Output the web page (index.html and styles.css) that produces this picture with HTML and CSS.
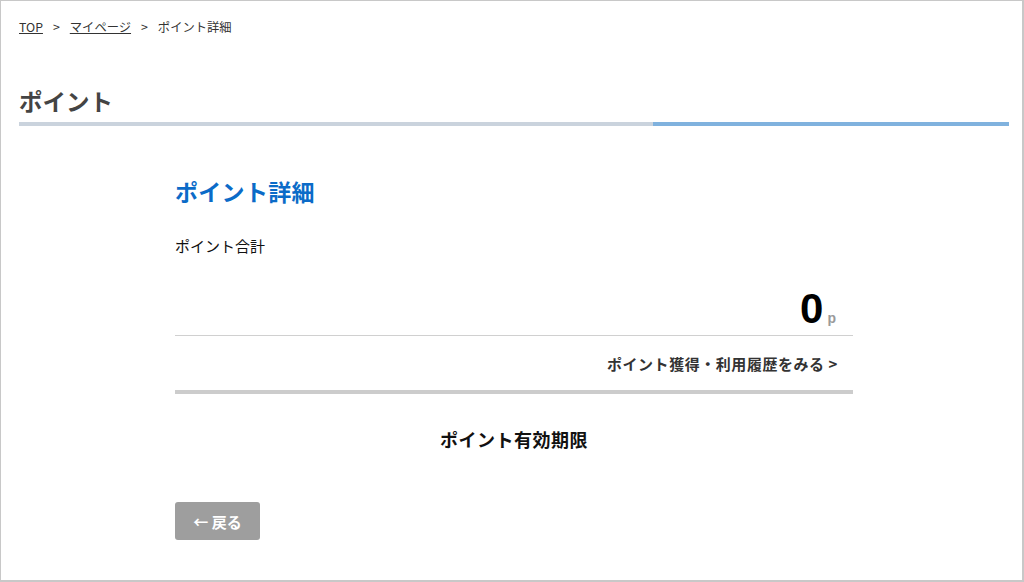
FILE: index.html
```html
<!DOCTYPE html>
<html lang="ja">
<head>
<meta charset="utf-8">
<title>ポイント詳細</title>
<link rel="stylesheet" href="styles.css">
</head>
<body>
<div class="frame">
  <nav class="breadcrumb">
    <a href="#" class="crumb-link">TOP</a>
    <span class="sep">&gt;</span>
    <a href="#" class="crumb-link">マイページ</a>
    <span class="sep">&gt;</span>
    <span class="crumb-current">ポイント詳細</span>
  </nav>
  <h1 class="page-title">ポイント</h1>
  <div class="title-bar"><span class="bar-gray"></span><span class="bar-blue"></span></div>

  <main class="content">
    <h2 class="section-title">ポイント詳細</h2>
    <p class="total-label">ポイント合計</p>
    <div class="amount-row">
      <span class="amount">0</span><span class="unit">p</span>
    </div>
    <div class="history-row">
      <a href="#" class="history-link">ポイント獲得・利用履歴をみる &gt;</a>
    </div>
    <div class="thick-line"></div>
    <h3 class="expire-title">ポイント有効期限</h3>
    <a href="#" class="back-btn">← 戻る</a>
  </main>
</div>
</body>
</html>
```

FILE: styles.css
```css
html, body {
  margin: 0;
  padding: 0;
  background: #fff;
}
body {
  font-family: "Noto Sans CJK JP", "Noto Sans", sans-serif;
  color: #333;
}
.frame {
  box-sizing: border-box;
  width: 1024px;
  height: 582px;
  border-top: 1px solid #c8c8c8;
  border-left: 1px solid #c8c8c8;
  border-right: 2px solid #c8c8c8;
  border-bottom: 2px solid #c8c8c8;
  overflow: hidden;
}
.breadcrumb {
  display: flex;
  align-items: center;
  padding: 17px 0 0 18px;
  font-size: 12.3px;
  line-height: 18px;
  color: #333;
}
.crumb-link {
  color: #333;
  text-decoration: underline;
}
.sep {
  margin: 0 10px;
}
.page-title {
  margin: 49px 0 0 18px;
  font-size: 23.5px;
  line-height: 32px;
  font-weight: 700;
  color: #444;
}
.title-bar {
  display: flex;
  margin: 5px 13px 0 18px;
  height: 4px;
}
.bar-gray {
  flex: 1;
  background: #cad3dd;
}
.bar-blue {
  width: 356px;
  background: #80b2de;
}
.content {
  width: 678px;
  margin: 49px 0 0 174px;
}
.section-title {
  margin: 0;
  font-size: 23px;
  line-height: 32px;
  font-weight: 700;
  letter-spacing: 0.3px;
  color: #0b6bc8;
}
.total-label {
  margin: 28px 0 0;
  font-size: 15px;
  line-height: 22px;
  color: #111;
}
.amount-row {
  display: flex;
  justify-content: flex-end;
  align-items: baseline;
  margin-top: 28px;
  padding-right: 17px;
  height: 50px;
  border-bottom: 1px solid #d0d0d0;
}
.amount {
  font-family: "Liberation Sans", Arial, sans-serif;
  font-size: 42px;
  line-height: 48px;
  font-weight: 700;
  color: #000;
}
.unit {
  margin-left: 4px;
  font-family: "Liberation Sans", Arial, sans-serif;
  font-size: 14px;
  font-weight: 700;
  color: #9a9a9a;
}
.history-row {
  display: flex;
  justify-content: flex-end;
  padding: 17px 15px 0 0;
}
.history-link {
  font-size: 15px;
  line-height: 22px;
  font-weight: 700;
  letter-spacing: 0.55px;
  color: #333;
  text-decoration: none;
}
.thick-line {
  margin-top: 15px;
  height: 4px;
  background: #cccccc;
}
.expire-title {
  margin: 32px 0 0;
  text-align: center;
  font-size: 18px;
  line-height: 26px;
  font-weight: 700;
  letter-spacing: 0.5px;
  color: #111;
}
.back-btn {
  display: flex;
  align-items: center;
  justify-content: center;
  margin-top: 50px;
  width: 85px;
  height: 38px;
  border-radius: 3px;
  background: #9e9e9e;
  color: #fff;
  font-size: 15px;
  font-weight: 700;
  text-decoration: none;
}
```
